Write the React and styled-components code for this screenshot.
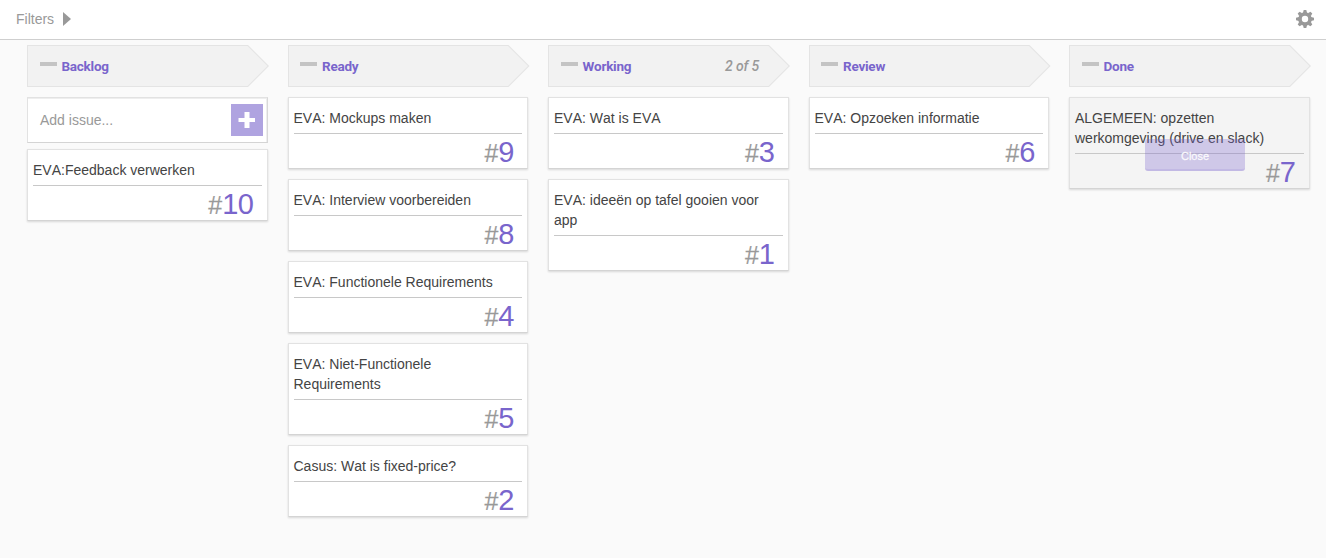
import React from "react";
import styled, { createGlobalStyle } from "styled-components";

const GlobalStyle = createGlobalStyle`
  * { box-sizing: border-box; }
  html, body { margin: 0; padding: 0; background: #fafafa; }
  body {
    font-family: "Liberation Sans", Arial, sans-serif;
    font-size: 14px;
    line-height: 20px;
    font-kerning: none;
    color: #444;
    overflow: hidden;
  }
`;

const Page = styled.div`
  height: 558px;
  background: #fafafa;
`;

const Toolbar = styled.header`
  display: flex;
  align-items: center;
  justify-content: space-between;
  height: 40px;
  padding: 0 12px 2px 16px;
  background: #fff;
  border-bottom: 1px solid #cfcfcf;
`;

const Filters = styled.div`
  display: flex;
  align-items: center;
  gap: 9px;
  color: #999;
`;

const Caret = styled.span`
  width: 0;
  height: 0;
  border-style: solid;
  border-width: 7px 0 7px 8px;
  border-color: transparent transparent transparent #999;
`;

const Board = styled.main`
  display: grid;
  grid-template-columns: repeat(5, 240.5px);
  column-gap: 20px;
  padding: 5px 0 0 27px;
  align-items: start;
`;

const Column = styled.section`
  display: flex;
  flex-direction: column;
`;

const arrow = "polygon(0 0, calc(100% - 21px) 0, 100% 50%, calc(100% - 21px) 100%, 0 100%)";

const ColumnHeader = styled.div`
  position: relative;
  z-index: 0;
  display: flex;
  align-items: center;
  height: 42px;
  width: 242px;
  margin-bottom: 10px;
  padding: 0 31px 0 12.5px;
  background: #e4e4e4;
  clip-path: ${arrow};
  font-family: Roboto, sans-serif;
  font-size: 14px;

  &::before {
    content: "";
    position: absolute;
    z-index: -1;
    inset: 1px 1.5px 1px 1px;
    background: #f2f2f2;
    clip-path: polygon(0 0, calc(100% - 20px) 0, 100% 50%, calc(100% - 20px) 100%, 0 100%);
  }
`;

const Collapse = styled.span`
  width: 17px;
  height: 4px;
  margin: 0 5px 4px 0;
  background: #c4c4c4;
`;

const ColumnName = styled.span`
  flex: 1;
  font-size: 13.5px;
  font-weight: 700;
  letter-spacing: -0.25px;
  color: #7965cc;
`;

const Limit = styled.span`
  font-weight: 500;
  font-style: italic;
  letter-spacing: -0.15px;
  color: #999;
`;

const AddIssue = styled.div`
  display: flex;
  align-items: center;
  justify-content: space-between;
  height: 46px;
  margin-bottom: 6px;
  padding: 0 4px 0 12px;
  background: #fff;
  border: 1px solid #e2e2e2;
  border-right-color: #d8d8d8;
  border-bottom-color: #d4d4d4;
  box-shadow: inset -1px 1px 0 #eee;
  color: #999;
`;

const AddButton = styled.span`
  display: flex;
  align-items: center;
  justify-content: center;
  width: 32px;
  height: 32px;
  background: #afa3e0;
`;

const Card = styled.article`
  position: relative;
  margin-bottom: 10px;
  padding: 10px 5px 0;
  background: ${(p) => (p.$closable ? "#f4f4f4" : "#fff")};
  border: 1px solid #e2e2e2;
  border-bottom-color: #d4d4d4;
  box-shadow: 0 1px 2px rgba(0, 0, 0, 0.14);
`;

const CardTitle = styled.div`
  padding: 0 20px 5px 0;
  border-bottom: 1px solid #c8c8c8;
`;

const CardNumber = styled.div`
  display: flex;
  align-items: baseline;
  justify-content: flex-end;
  height: 34px;
  padding: 1px 8px 0 0;
  font-size: 29px;
  line-height: 34px;
  letter-spacing: -0.5px;
  color: #7965cc;
`;

const Hash = styled.span`
  font-size: 25px;
  letter-spacing: 0;
  color: #999;
  -webkit-text-stroke: 0.2px currentColor;
`;

const CloseButton = styled.span`
  position: absolute;
  left: 75px;
  bottom: 17px;
  width: 100px;
  height: 32px;
  border-radius: 3px;
  border-bottom: 2px solid rgba(121, 101, 204, 0.14);
  background: rgba(121, 101, 204, 0.3);
  color: rgba(255, 255, 255, 0.85);
  font-size: 11px;
  line-height: 34px;
  text-align: center;
  -webkit-text-stroke: 0.3px currentColor;
`;

const columns = [
  { name: "Backlog", add: true, cards: [[10, "EVA:Feedback verwerken"]] },
  {
    name: "Ready",
    cards: [
      [9, "EVA: Mockups maken"],
      [8, "EVA: Interview voorbereiden"],
      [4, "EVA: Functionele Requirements"],
      [5, "EVA: Niet-Functionele Requirements"],
      [2, "Casus: Wat is fixed-price?"],
    ],
  },
  {
    name: "Working",
    limit: "2 of 5",
    cards: [
      [3, "EVA: Wat is EVA"],
      [1, "EVA: ideeën op tafel gooien voor app"],
    ],
  },
  { name: "Review", cards: [[6, "EVA: Opzoeken informatie"]] },
  {
    name: "Done",
    closable: true,
    cards: [[7, "ALGEMEEN: opzetten werkomgeving (drive en slack)"]],
  },
];

const teeth = [0, 45, 90, 135, 180, 225, 270, 315];

function Gear() {
  return (
    <svg width="18" height="18" viewBox="-9 -9 18 18" aria-label="Settings">
      <circle r="5" fill="none" stroke="#999" strokeWidth="3.6" />
      {teeth.map((a) => (
        <path key={a} d="M-2.1 -6 L-1.3 -9 H1.3 L2.1 -6 Z" fill="#999" transform={`rotate(${a})`} />
      ))}
    </svg>
  );
}

function Plus() {
  return (
    <svg width="18" height="16" viewBox="0 0 18 16" aria-label="Add">
      <path d="M6.5 0h5v6H17v4h-5.500V16h-5v-6H.5v-4h6z" fill="#fff" />
    </svg>
  );
}

export default function App() {
  return (
    <Page>
      <GlobalStyle />
      <Toolbar>
        <Filters>
          Filters
          <Caret />
        </Filters>
        <Gear />
      </Toolbar>
      <Board>
        {columns.map((col) => (
          <Column key={col.name}>
            <ColumnHeader>
              <Collapse />
              <ColumnName>{col.name}</ColumnName>
              {col.limit && <Limit>{col.limit}</Limit>}
            </ColumnHeader>
            {col.add && (
              <AddIssue>
                Add issue...
                <AddButton>
                  <Plus />
                </AddButton>
              </AddIssue>
            )}
            {col.cards.map(([id, title]) => (
              <Card key={id} $closable={col.closable}>
                <CardTitle>{title}</CardTitle>
                <CardNumber>
                  <Hash>#</Hash>
                  {id}
                </CardNumber>
                {col.closable && <CloseButton>Close</CloseButton>}
              </Card>
            ))}
          </Column>
        ))}
      </Board>
    </Page>
  );
}
